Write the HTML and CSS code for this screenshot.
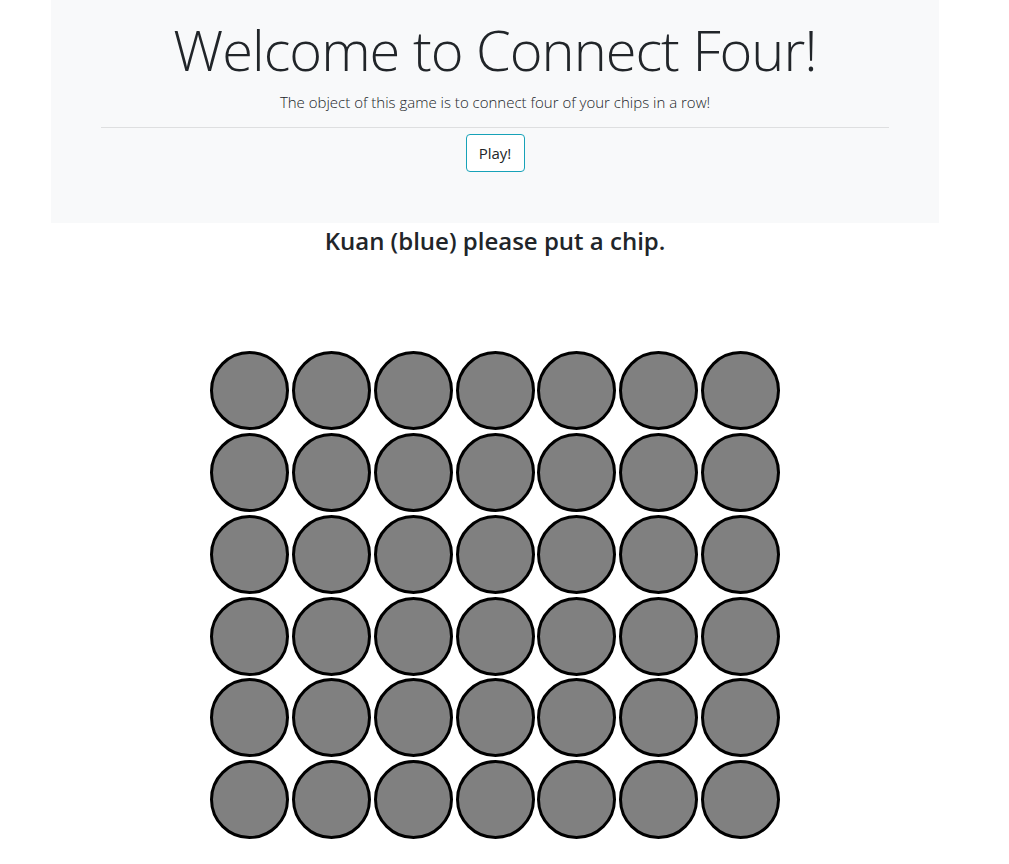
FILE: index.html
```html
<!DOCTYPE html>
<html lang="en">
<head>
<meta charset="utf-8">
<title>Connect Four</title>
<link rel="stylesheet" href="styles.css">
</head>
<body>
<div class="page">
  <div class="jumbotron">
    <h1 class="title">Welcome to Connect Four!</h1>
    <p class="lead">The object of this game is to connect four of your chips in a row!</p>
    <hr class="divider">
    <div class="actions"><button class="play-btn" type="button">Play!</button></div>
  </div>
  <h4 class="status">Kuan (blue) please put a chip.</h4>
  <div class="board">
    <div class="cell"></div><div class="cell"></div><div class="cell"></div><div class="cell"></div><div class="cell"></div><div class="cell"></div><div class="cell"></div>
    <div class="cell"></div><div class="cell"></div><div class="cell"></div><div class="cell"></div><div class="cell"></div><div class="cell"></div><div class="cell"></div>
    <div class="cell"></div><div class="cell"></div><div class="cell"></div><div class="cell"></div><div class="cell"></div><div class="cell"></div><div class="cell"></div>
    <div class="cell"></div><div class="cell"></div><div class="cell"></div><div class="cell"></div><div class="cell"></div><div class="cell"></div><div class="cell"></div>
    <div class="cell"></div><div class="cell"></div><div class="cell"></div><div class="cell"></div><div class="cell"></div><div class="cell"></div><div class="cell"></div>
    <div class="cell"></div><div class="cell"></div><div class="cell"></div><div class="cell"></div><div class="cell"></div><div class="cell"></div><div class="cell"></div>
  </div>
</div>
</body>
</html>
```
FILE: styles.css
```css
html, body {
  margin: 0;
  padding: 0;
  background: #fff;
}
body {
  font-family: "Open Sans", "Noto Sans", sans-serif;
  color: #212529;
}
.page {
  width: 990px;
}
.jumbotron {
  box-sizing: border-box;
  width: 888px;
  margin: 0 auto;
  background: #f8f9fa;
  padding: 16px 50px 51px;
  text-align: center;
}
.title {
  margin: 0;
  font-size: 56px;
  font-weight: 300;
  line-height: 1.2;
  letter-spacing: -1px;
  color: #212529;
}
.lead {
  margin: 8px 0 0;
  font-size: 15px;
  font-weight: 300;
  line-height: 1.5;
}
.divider {
  margin: 13px 0 6px;
  border: 0;
  border-top: 1px solid rgba(0,0,0,0.1);
}
.actions {
  display: flex;
  justify-content: center;
}
.play-btn {
  box-sizing: border-box;
  width: 59px;
  height: 38px;
  background: #fff;
  border: 1px solid #17a2b8;
  border-radius: 4px;
  font-family: inherit;
  font-size: 15px;
  color: #212529;
  padding: 0;
}
.status {
  margin: 4px 0 0;
  text-align: center;
  font-size: 24px;
  font-weight: 600;
  line-height: 1.2;
}
.board {
  display: grid;
  grid-template-columns: repeat(7, 79px);
  gap: 2.7px;
  width: max-content;
  margin: 96px auto 0;
}
.cell {
  box-sizing: border-box;
  width: 79px;
  height: 79px;
  border-radius: 50%;
  border: 3px solid #000;
  background: #808080;
}
```
